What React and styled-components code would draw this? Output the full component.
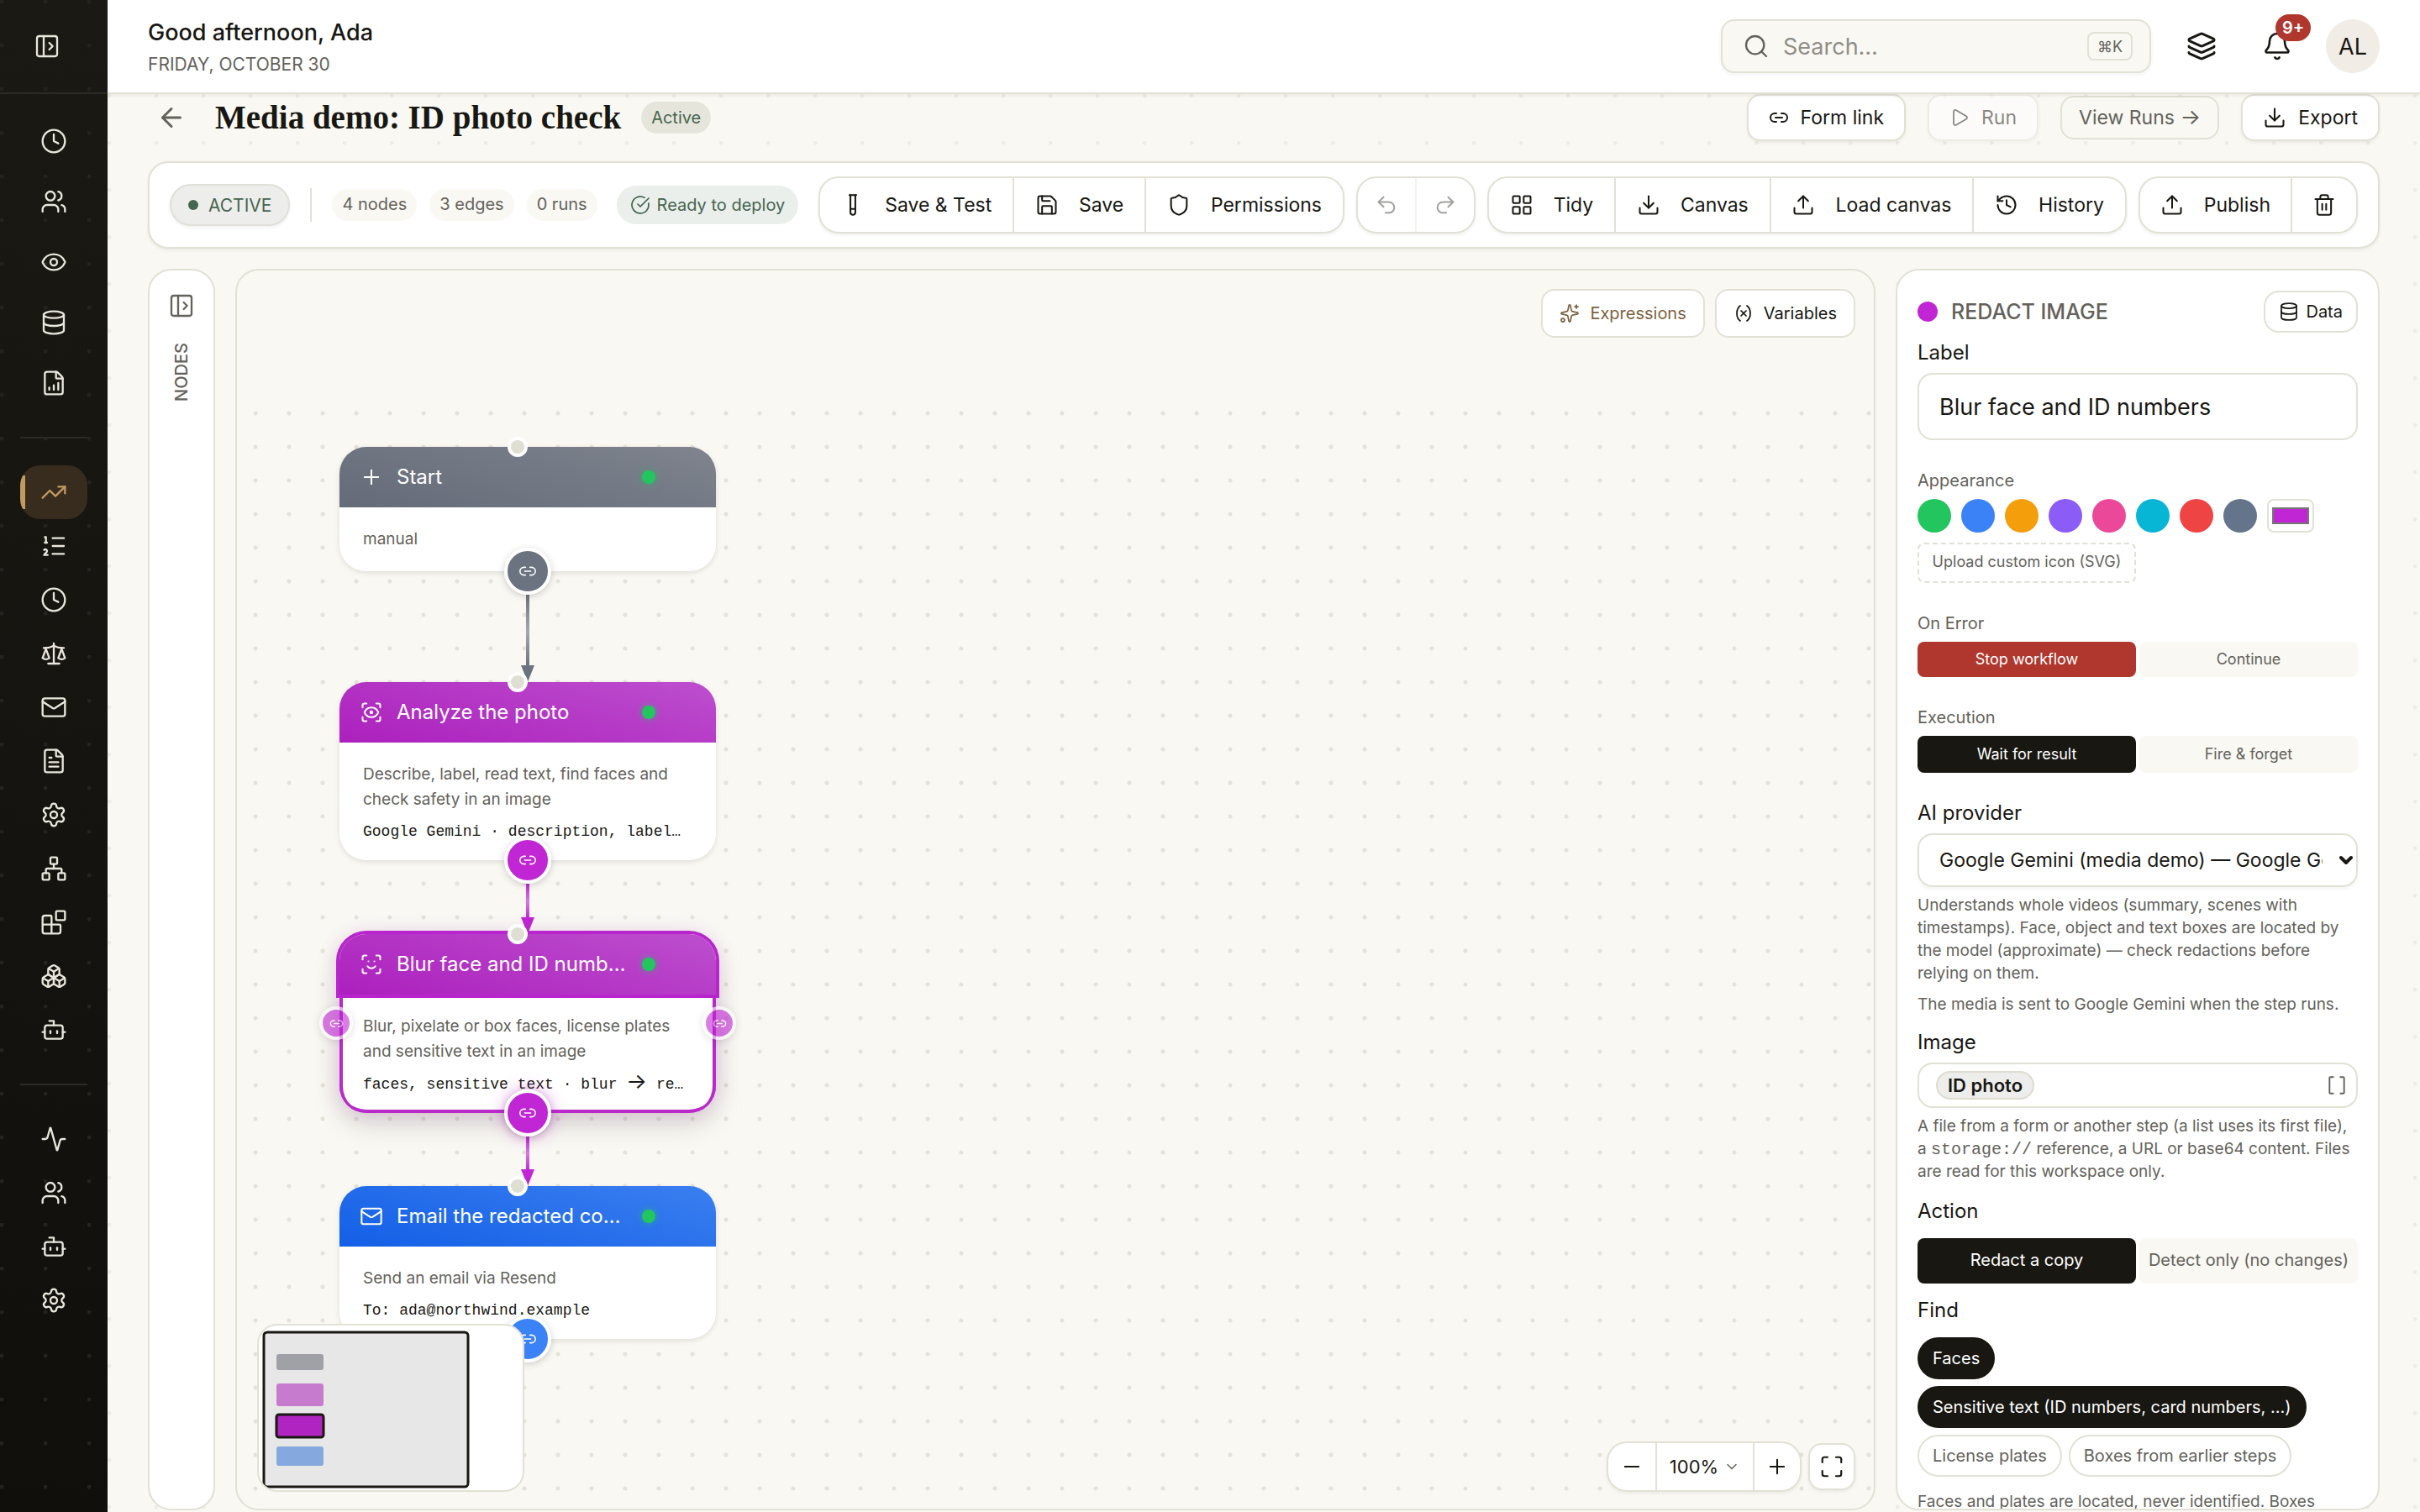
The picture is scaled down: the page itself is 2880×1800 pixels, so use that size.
import React from 'react'
import styled, { createGlobalStyle, css } from 'styled-components'
import {
  Activity, ArrowLeft, Bell, Blocks, Bot, Boxes, Brackets, ChevronDown, CircleCheckBig, Clock,
  Database, Download, Eye, FileChartColumnIncreasing, FileText, History, Layers, LayoutGrid,
  Link2, ListOrdered, Mail, Maximize, Minus, Network, PanelLeftOpen, Play, Plus, Redo2, Save,
  Scale, ScanEye, ScanFace, Search, Settings, Shield, Sparkles, TestTube, Trash2, TrendingUp,
  Undo2, Upload, Users, Variable
} from 'lucide-react'

const GlobalStyle = createGlobalStyle`
  :root {
    --ink: #181712;
    --muted: #63625b;
    --line: #e2e1d5;
    --paper: #f9f8f3;
    --cream: #e9e6dc;
    --red: #b0372d;
    --green: #46654f;
    --sans: 'Inter', 'Liberation Sans', sans-serif;
    --serif: 'Liberation Serif', serif;
    --mono: 'Liberation Mono', monospace;
  }

  * {
    box-sizing: border-box;
  }

  body {
    margin: 0;
    background: var(--paper);
    color: var(--ink);
    font-family: var(--sans);
  }

  button, input, select {
    font-family: inherit;
    color: inherit;
    margin: 0;
  }

  button {
    cursor: pointer;
  }
`

/* ---------- shell ---------- */

const Shell = styled.div`
  display: grid;
  grid-template-columns: 128px minmax(0, 1fr);
  height: 100vh;
  overflow: hidden;
`

const Sidebar = styled.aside`
  display: flex;
  flex-direction: column;
  color: var(--cream);
  background:
    radial-gradient(circle at 2px 2px, #24231f 2px, transparent 3px) 0 0 / 52px 52px,
    linear-gradient(#1b1913, #110f0c);
`

const SidebarTop = styled.div`
  height: 112px;
  padding-left: 28px;
  display: flex;
  align-items: center;
  border-bottom: 2px solid #2c2b27;
`

const PlainButton = styled.button`
  width: ${props => props.$size || 56}px;
  height: ${props => props.$size || 56}px;
  padding: 0;
  border: 0;
  background: none;
  display: grid;
  place-items: center;
  flex: none;
  position: relative;
  color: ${props => props.$muted ? 'var(--muted)' : 'inherit'};
`

const Nav = styled.nav`
  padding: 24px;
  display: flex;
  flex-direction: column;
`

const NavGroup = styled.div`
  display: flex;
  flex-direction: column;
  gap: ${props => props.$gap || 0}px;

  & + & {
    margin-top: 32px;
    padding-top: 32px;
    border-top: 2px solid #2c2b27;
  }
`

const NavLink = styled.a`
  height: 64px;
  display: grid;
  place-items: center;
  color: inherit;
  border-radius: 24px;

  ${props => props.$active && css`
    color: #c09a5f;
    background: linear-gradient(90deg, #c09a5f 6px, transparent 6px) 0 50% / 100% 40px no-repeat, #382c1f;
  `}
`

const Main = styled.main`
  display: flex;
  flex-direction: column;
  min-width: 0;
  height: 100vh;
`

const Header = styled.header`
  height: 112px;
  flex: none;
  padding: 0 48px;
  display: flex;
  align-items: center;
  background: #fff;
  border-bottom: 2px solid var(--line);
  box-shadow: 0 2px 4px rgba(24, 23, 18, .06);
  position: relative;
`

const Greeting = styled.div`
  flex: 1;
  padding-top: 4px;
`

const Hello = styled.div`
  font-size: 27px;
  line-height: 40px;
  font-weight: 500;
`

const Today = styled.div`
  font-size: 21px;
  line-height: 36px;
  color: var(--muted);
`

const SearchBox = styled.label`
  width: 512px;
  height: 64px;
  padding: 0 20px 0 24px;
  display: flex;
  align-items: center;
  gap: 16px;
  border: 2px solid var(--line);
  border-radius: 16px;
  background: var(--paper);
  color: var(--muted);
  box-shadow: 0 2px 4px rgba(24, 23, 18, .05);
`

const SearchInput = styled.input`
  flex: 1;
  min-width: 0;
  padding: 0;
  border: 0;
  outline: 0;
  background: none;
  font-size: 27px;

  &::placeholder {
    color: #8f8e86;
    opacity: 1;
  }
`

const Kbd = styled.kbd`
  height: 34px;
  padding: 0 10px;
  display: flex;
  align-items: center;
  border: 2px solid var(--line);
  border-radius: 8px;
  font-family: var(--sans);
  font-size: 18px;
`

const HeaderIcons = styled.div`
  display: flex;
  align-items: center;
  gap: 26px;
  margin-left: 28px;
`

const Count = styled.span`
  position: absolute;
  top: -6px;
  left: 30px;
  height: 32px;
  min-width: 40px;
  padding: 0 8px;
  border-radius: 16px;
  background: var(--red);
  color: #fff;
  font-size: 20px;
  line-height: 32px;
  font-weight: 600;
`

const Avatar = styled.button`
  width: 64px;
  height: 64px;
  padding: 0;
  border: 0;
  border-radius: 50%;
  background: #f1ece6;
  font-size: 27px;
`

const Page = styled.div`
  flex: 1;
  min-height: 0;
  padding: 0 48px 2px;
  display: flex;
  flex-direction: column;
  gap: 24px;
  background: radial-gradient(circle at 2px 2px, #eeede5 2px, transparent 3px) 0 0 / 56px 56px;
`

/* ---------- title row ---------- */

const TitleRow = styled.div`
  height: 56px;
  flex: none;
  display: flex;
  align-items: center;
  gap: 24px;
`

const Title = styled.h1`
  margin: 0;
  font-family: var(--serif);
  font-size: 39px;
  line-height: 48px;
  font-weight: 700;
`

const StatusTag = styled.span`
  height: 38px;
  padding: 0 12px;
  border-radius: 19px;
  background: #e6e5dc;
  color: var(--green);
  font-size: 20px;
  line-height: 38px;
  margin-right: auto;
`

const Actions = styled.div`
  display: flex;
  align-items: center;
  gap: 26px;
`

const ActionButton = styled.button`
  height: ${props => props.$ghost ? 52 : 56}px;
  padding: 0 ${props => props.$ghost ? 20 : 24}px;
  display: flex;
  align-items: center;
  gap: 14px;
  border: 2px solid var(--line);
  border-radius: 16px;
  background: ${props => props.$ghost ? 'transparent' : '#fff'};
  color: ${props => props.$ghost ? 'var(--muted)' : 'var(--ink)'};
  font-size: 23px;
  white-space: pre;
  box-shadow: ${props => props.$ghost ? 'none' : '0 2px 4px rgba(24, 23, 18, .06)'};

  &:disabled {
    opacity: .5;
    color: var(--ink);
  }
`

/* ---------- toolbar ---------- */

const Toolbar = styled.section`
  height: 104px;
  flex: none;
  padding: 0 24px;
  display: flex;
  align-items: center;
  gap: 14px;
  background: #fff;
  border: 2px solid var(--line);
  border-radius: 24px;
  box-shadow: 0 2px 4px rgba(24, 23, 18, .06);
`

const ToolbarInfo = styled.div`
  display: flex;
  align-items: center;
  flex: none;
  margin-right: 10px;
`

const LivePill = styled.span`
  height: 50px;
  padding: 0 20px;
  display: flex;
  align-items: center;
  gap: 12px;
  border: 2px solid #e0dfd8;
  border-radius: 25px;
  background: #ededeb;
  color: var(--green);
  font-size: 21px;
  box-shadow: 0 2px 4px rgba(24, 23, 18, .06);

  &::before {
    content: '';
    width: 12px;
    height: 12px;
    border-radius: 50%;
    background: currentColor;
  }
`

const Rule = styled.span`
  width: 2px;
  height: 40px;
  margin: 0 24px;
  background: var(--line);
`

const Chip = styled.span`
  height: 38px;
  padding: 0 12px;
  margin-right: 15px;
  border-radius: 19px;
  background: var(--paper);
  color: var(--muted);
  font-size: 20px;
  line-height: 36px;
`

const ReadyChip = styled.span`
  height: 46px;
  padding: 0 16px;
  margin-left: 8px;
  display: flex;
  align-items: center;
  gap: 8px;
  border-radius: 23px;
  background: #eaefeb;
  color: var(--green);
  font-size: 20px;
`

const ButtonGroup = styled.div`
  height: 68px;
  display: flex;
  flex: ${props => props.$grow || 0} 0 auto;
  border: 2px solid var(--line);
  border-radius: 24px;
  overflow: hidden;
  background: #fff;
  box-shadow: 0 2px 4px rgba(24, 23, 18, .06);
`

const ToolButton = styled.button`
  flex: 1 0 auto;
  padding: 0 ${props => props.$narrow ? 20 : 24}px;
  display: flex;
  align-items: center;
  justify-content: center;
  gap: 24px;
  border: 0;
  background: none;
  font-size: 23px;

  & + & {
    border-left: 2px solid var(--line);
  }

  &:disabled {
    opacity: .4;
  }
`

/* ---------- workspace ---------- */

const Workspace = styled.div`
  flex: 1;
  min-height: 0;
  display: grid;
  grid-template-columns: 80px minmax(0, 1fr) 576px;
  grid-template-rows: minmax(0, 1fr);
  gap: 24px;
`

const panel = css`
  border: 2px solid var(--line);
  border-radius: 28px;
  overflow: hidden;
`

const NodesRail = styled.aside`
  ${panel}
  background: #fff;
  padding-top: 14px;
  display: flex;
  flex-direction: column;
  align-items: center;
  gap: 16px;
`

const RailTitle = styled.span`
  writing-mode: vertical-rl;
  transform: rotate(180deg);
  color: var(--muted);
  font-size: 20px;
  line-height: 24px;
  font-weight: 500;
`

const Canvas = styled.section`
  ${panel}
  position: relative;
  background: var(--paper);

  &::before {
    content: '';
    position: absolute;
    inset: 150px 0 0 0;
    background: radial-gradient(circle at 22px 20px, #e4e2d9 2px, transparent 3px) 0 0 / 40px 40px;
  }
`

const CanvasActions = styled.div`
  position: absolute;
  top: 22px;
  right: 22px;
  display: flex;
  gap: 12px;
`

const CanvasAction = styled.button`
  height: 58px;
  padding: 0 20px;
  display: flex;
  align-items: center;
  gap: 12px;
  border: 2px solid var(--line);
  border-radius: 16px;
  background: #fff;
  color: ${props => props.$gold ? '#7c6240' : 'var(--ink)'};
  font-size: 20px;
`

const Node = styled.article`
  position: absolute;
  left: ${props => props.$x}px;
  top: ${props => props.$y}px;
  width: 448px;
  border-radius: 32px;
  box-shadow: ${props => props.$selected
    ? '0 12px 32px rgba(24, 23, 18, .16), 0 0 24px rgba(192, 38, 211, .16)'
    : '0 2px 6px rgba(24, 23, 18, .12)'};
`

const NodeHead = styled.header`
  position: relative;
  z-index: 1;
  height: 72px;
  padding: 0 72px 0 24px;
  display: flex;
  align-items: center;
  border-radius: 32px 32px 0 0;
  color: #fff;
  background: linear-gradient(15deg, ${props => props.$from}, ${props => props.$to});
  box-shadow: ${props => props.$selected ? '0 0 0 4px #b925cd' : 'none'};
`

const NodeTitle = styled.h2`
  margin: 0 0 0 16px;
  flex: 1;
  min-width: 0;
  font-size: 24px;
  line-height: 32px;
  font-weight: 400;
  white-space: nowrap;
  overflow: hidden;
  text-overflow: ellipsis;
`

const Health = styled.span`
  width: 16px;
  height: 16px;
  margin-left: 16px;
  border-radius: 50%;
  background: #22c55e;
  box-shadow: 0 0 8px rgba(34, 197, 94, .6);
`

const NodeBody = styled.div`
  padding: 23px 28px;
  border-radius: 0 0 32px 32px;
  background: #fff;
  box-shadow: ${props => props.$selected
    ? 'inset 4px 0 #b92bc9, inset -4px 0 #b92bc9, inset 0 -4px #b92bc9'
    : 'none'};
`

const NodeText = styled.p`
  margin: 0;
  font-size: 19px;
  line-height: 30px;
  color: var(--muted);
`

const NodeCode = styled.p`
  margin: 12px 4px 0 0;
  font-family: var(--mono);
  font-size: 18px;
  line-height: 22px;
  white-space: nowrap;
  overflow: hidden;
  text-overflow: ellipsis;
`

const Arrow = styled.span`
  font-family: var(--sans);
  font-size: 26px;
  line-height: 16px;
`

const InPort = styled.span`
  position: absolute;
  z-index: 1;
  top: -12px;
  left: 200px;
  width: 24px;
  height: 24px;
  border: 4px solid #fff;
  border-radius: 50%;
  background: #dfded3;
`

const OutPort = styled.button`
  position: absolute;
  z-index: 1;
  bottom: -28px;
  left: 196px;
  width: 56px;
  height: 56px;
  padding: 0;
  display: grid;
  place-items: center;
  border: 4px solid #fff;
  border-radius: 50%;
  background: ${props => props.$color};
  color: #fff;
  box-shadow: 0 2px 8px rgba(24, 23, 18, .2)${props => props.$selected ? ', 0 0 20px rgba(192, 38, 211, .4)' : ''};
`

const SidePort = styled(OutPort)`
  top: 86px;
  bottom: auto;
  left: ${props => props.$right ? 432 : -24}px;
  width: 40px;
  height: 40px;
  opacity: .6;
`

const Edge = styled.svg`
  position: absolute;
  left: ${props => props.$x}px;
  top: ${props => props.$y}px;
`

const Minimap = styled.div`
  position: absolute;
  z-index: 2;
  left: 24px;
  bottom: 20px;
  width: 318px;
  height: 200px;
  border: 2px solid var(--line);
  border-radius: 24px;
  background: #fff;
  overflow: hidden;
`

const ZoomBar = styled.div`
  position: absolute;
  right: 22px;
  bottom: 20px;
  display: flex;
  align-items: center;
  gap: 8px;
`

const ZoomGroup = styled(ButtonGroup)`
  height: 60px;
`

const ZoomButton = styled.button`
  padding: 0;
  width: ${props => props.$wide ? 116 : 56}px;
  display: flex;
  align-items: center;
  justify-content: center;
  gap: 6px;
  border: 0;
  background: none;
  font-size: 22px;

  & + & {
    border-left: 2px solid var(--line);
  }
`

const FitButton = styled(ZoomButton)`
  height: 56px;
  border: 2px solid var(--line);
  border-radius: 16px;
  background: #fff;
  box-shadow: 0 2px 4px rgba(24, 23, 18, .06);
`

/* ---------- inspector ---------- */

const Inspector = styled.aside`
  ${panel}
  padding: 24px;
  background: #fff;
`

const InspectorHead = styled.div`
  height: 50px;
  display: flex;
  align-items: center;
  gap: 16px;
  margin-bottom: 8px;
`

const Dot = styled.span`
  width: 24px;
  height: 24px;
  border-radius: 50%;
  background: #c026d3;
`

const InspectorTitle = styled.h2`
  margin: 0;
  flex: 1;
  font-size: 25px;
  font-weight: 500;
  color: var(--muted);
`

const DataButton = styled.button`
  height: 50px;
  padding: 0 16px;
  display: flex;
  align-items: center;
  gap: 8px;
  border: 2px solid var(--line);
  border-radius: 18px;
  background: #fff;
  font-size: 20px;
`

const Field = styled.div`
  display: flex;
  flex-direction: column;
  gap: ${props => props.$gap || 8}px;
  margin-bottom: ${props => props.$after || 16}px;
`

const FieldLabel = styled.label`
  font-size: ${props => props.$small ? 20 : 24}px;
  line-height: ${props => props.$small ? 28 : 32}px;
  color: ${props => props.$small ? 'var(--muted)' : 'var(--ink)'};
`

const TextInput = styled.input`
  width: 100%;
  height: 80px;
  padding: 0 24px;
  border: 2px solid var(--line);
  border-radius: 18px;
  background: #fff;
  font-size: 27px;
`

const Swatches = styled.div`
  display: flex;
  flex-wrap: wrap;
  gap: 12px;
`

const Swatch = styled.button`
  width: 40px;
  height: 40px;
  padding: 0;
  border: 0;
  border-radius: 50%;
  background: ${props => props.$color};
`

const ColorInput = styled.input`
  width: 56px;
  height: 40px;
  padding: 8px 4px;
  border: 2px solid var(--line);
  border-radius: 8px;
  background: #fff;

  &::-webkit-color-swatch-wrapper {
    padding: 0;
  }

  &::-webkit-color-swatch {
    border: 2px solid #767676;
    border-radius: 0;
  }
`

const UploadButton = styled.button`
  height: 48px;
  width: 260px;
  padding: 0 0 4px;
  border: 2px dashed var(--line);
  border-radius: 8px;
  background: none;
  color: var(--muted);
  font-size: 18px;
`

const Segments = styled.div`
  display: grid;
  grid-template-columns: 1fr 1fr;
  gap: 4px;
`

const Segment = styled.button`
  height: ${props => props.$height || 42}px;
  padding: 0 0 2px;
  border: 0;
  border-radius: 8px;
  background: ${props => props.$fill || 'var(--paper)'};
  color: ${props => props.$fill ? '#fff' : 'var(--muted)'};
  font-size: ${props => props.$large ? 20 : 18}px;
  white-space: nowrap;
`

const SelectWrap = styled.div`
  position: relative;

  svg {
    position: absolute;
    right: 2px;
    top: 20px;
    pointer-events: none;
  }
`

const Select = styled.select`
  appearance: none;
  width: 100%;
  height: 64px;
  padding: 0 40px 0 24px;
  border: 2px solid var(--line);
  border-radius: 18px;
  background: #fff;
  font-size: 23px;
  box-shadow: 0 2px 4px rgba(24, 23, 18, .05);
`

const Help = styled.p`
  margin: 0;
  font-size: 19px;
  line-height: 27px;
  color: var(--muted);

  & + & {
    margin-top: 2px;
  }

  code {
    font-family: var(--mono);
    font-size: 20px;
    line-height: 20px;
  }
`

const TokenField = styled.div`
  height: 54px;
  padding: 0 10px 0 20px;
  display: flex;
  align-items: center;
  justify-content: space-between;
  border: 2px solid var(--line);
  border-radius: 18px;
`

const Token = styled.button`
  height: 34px;
  padding: 0 12px;
  border: 2px solid #dedccf;
  border-radius: 17px;
  background: #ededec;
  font-size: 22px;
  line-height: 28px;
  font-weight: 600;
`

const Pills = styled.div`
  display: flex;
  flex-wrap: wrap;
  gap: 8px;
`

const Pill = styled.button`
  height: 50px;
  padding: 0 16px;
  border: 2px solid ${props => props.$on ? 'var(--ink)' : 'var(--line)'};
  border-radius: 25px;
  background: ${props => props.$on ? 'var(--ink)' : '#fff'};
  color: ${props => props.$on ? '#fff' : 'var(--muted)'};
  font-size: 20px;
`

const navGroups = [
  { gap: 8, items: [['Recent', Clock], ['People', Users], ['Views', Eye], ['Data', Database], ['Reports', FileChartColumnIncreasing]] },
  {
    items: [
      ['Workflows', TrendingUp], ['Queues', ListOrdered], ['Schedules', Clock], ['Rules', Scale],
      ['Mail', Mail], ['Forms', FileText], ['Options', Settings], ['Network', Network],
      ['Blocks', Blocks], ['Packages', Boxes], ['Agents', Bot]
    ]
  },
  { items: [['Activity', Activity], ['Team', Users], ['Assistants', Bot], ['Settings', Settings]] }
]

const purple = ['#ac20bd', '#bd4fce']

const nodes = [
  { y: 210, icon: Plus, title: 'Start', text: 'manual', color: '#6b7280', grad: ['#646b78', '#7f848e'] },
  {
    y: 490, icon: ScanEye, title: 'Analyze the photo', color: '#c026d3', grad: purple,
    text: 'Describe, label, read text, find faces and check safety in an image',
    code: 'Google Gemini · description, labels, text, faces'
  },
  {
    y: 790, icon: ScanFace, title: 'Blur face and ID numbers', color: '#c026d3', grad: purple, selected: true,
    text: 'Blur, pixelate or box faces, license plates and sensitive text in an image',
    code: <>faces, sensitive text · blur <Arrow>→</Arrow> redacted image</>
  },
  {
    y: 1090, icon: Mail, title: 'Email the redacted copy to Ada', color: '#3b82f6', grad: ['#135fe6', '#3b7ff0'],
    text: 'Send an email via Resend', code: 'To: ada@northwind.example'
  }
]

const edges = [
  { id: 'a', y: 386, height: 104, color: '#6b7280' },
  { id: 'b', y: 730, height: 60, color: '#c026d3' },
  { id: 'c', y: 1030, height: 60, color: '#c026d3' }
]

const swatches = ['#22c55e', '#3b82f6', '#f59e0b', '#8b5cf6', '#ec4899', '#06b6d4', '#ef4444', '#64748b']

const FlowNode = ({ node }) => {
  const Icon = node.icon
  return (
    <Node $x={122} $y={node.y} $selected={node.selected}>
      <NodeHead $from={node.grad[0]} $to={node.grad[1]} $selected={node.selected}>
        <Icon size={28} strokeWidth={1.75} />
        <NodeTitle>{node.title}</NodeTitle>
        <Health />
      </NodeHead>
      <NodeBody $selected={node.selected}>
        <NodeText>{node.text}</NodeText>
        {node.code && <NodeCode>{node.code}</NodeCode>}
      </NodeBody>
      <InPort />
      {node.selected && (
        <>
          <SidePort aria-label="Connect left" $color={node.color}><Link2 size={17} /></SidePort>
          <SidePort aria-label="Connect right" $color={node.color} $right><Link2 size={17} /></SidePort>
        </>
      )}
      <OutPort aria-label="Connect" $color={node.color} $selected={node.selected}><Link2 size={22} strokeWidth={1.75} /></OutPort>
    </Node>
  )
}

const FlowEdge = ({ edge }) => (
  <Edge $x={338} $y={edge.y} width="16" height={edge.height} viewBox={`0 0 16 ${edge.height}`}>
    <defs>
      <linearGradient id={`edge-${edge.id}`} x1="0" y1="0" x2="0" y2="1">
        <stop offset="0" stopColor={edge.color} />
        <stop offset=".5" stopColor={edge.color} stopOpacity=".6" />
        <stop offset="1" stopColor={edge.color} />
      </linearGradient>
    </defs>
    <rect x="6" y="0" width="4" height={edge.height - 18} fill={`url(#edge-${edge.id})`} />
    <path d={`M0 ${edge.height - 20}h16l-8 20z`} fill={edge.color} />
  </Edge>
)

const App = () => {
  return (
    <>
      <GlobalStyle />
      <Shell>
        <Sidebar>
          <SidebarTop>
            <PlainButton aria-label="Expand sidebar"><PanelLeftOpen size={32} strokeWidth={1.75} /></PlainButton>
          </SidebarTop>
          <Nav>
            {navGroups.map((group, i) => (
              <NavGroup key={i} $gap={group.gap}>
                {group.items.map(([name, Icon]) => (
                  <NavLink key={name} href="#" aria-label={name} $active={name === 'Workflows'}>
                    <Icon size={32} strokeWidth={1.75} />
                  </NavLink>
                ))}
              </NavGroup>
            ))}
          </Nav>
        </Sidebar>

        <Main>
          <Header>
            <Greeting>
              <Hello>Good afternoon, Ada</Hello>
              <Today>FRIDAY, OCTOBER 30</Today>
            </Greeting>
            <SearchBox>
              <Search size={32} strokeWidth={1.75} />
              <SearchInput placeholder="Search…" aria-label="Search" />
              <Kbd>⌘K</Kbd>
            </SearchBox>
            <HeaderIcons>
              <PlainButton aria-label="Layers" $size={64}><Layers size={36} strokeWidth={2} /></PlainButton>
              <PlainButton aria-label="Notifications" $size={64}><Bell size={36} strokeWidth={1.75} /><Count>9+</Count></PlainButton>
              <Avatar>AL</Avatar>
            </HeaderIcons>
          </Header>

          <Page>
            <TitleRow>
              <PlainButton aria-label="Back" $muted><ArrowLeft size={36} strokeWidth={2} /></PlainButton>
              <Title>Media demo: ID photo check</Title>
              <StatusTag>Active</StatusTag>
              <Actions>
                <ActionButton><Link2 size={24} />Form link</ActionButton>
                <ActionButton disabled><Play size={24} strokeWidth={1.75} />Run</ActionButton>
                <ActionButton $ghost><span>View Runs <Arrow>→</Arrow></span></ActionButton>
                <ActionButton><Download size={28} strokeWidth={1.75} />Export</ActionButton>
              </Actions>
            </TitleRow>

            <Toolbar>
              <ToolbarInfo>
                <LivePill>ACTIVE</LivePill>
                <Rule />
                <Chip>4 nodes</Chip>
                <Chip>3 edges</Chip>
                <Chip>0 runs</Chip>
                <ReadyChip><CircleCheckBig size={24} strokeWidth={1.75} />Ready to deploy</ReadyChip>
              </ToolbarInfo>
              <ButtonGroup $grow={3}>
                <ToolButton><TestTube size={28} strokeWidth={1.75} />Save &amp; Test</ToolButton>
                <ToolButton><Save size={28} strokeWidth={1.75} />Save</ToolButton>
                <ToolButton><Shield size={28} strokeWidth={1.75} />Permissions</ToolButton>
              </ButtonGroup>
              <ButtonGroup>
                <ToolButton disabled $narrow aria-label="Undo"><Undo2 size={28} strokeWidth={1.75} /></ToolButton>
                <ToolButton disabled $narrow aria-label="Redo"><Redo2 size={28} strokeWidth={1.75} /></ToolButton>
              </ButtonGroup>
              <ButtonGroup $grow={4}>
                <ToolButton><LayoutGrid size={28} strokeWidth={1.75} />Tidy</ToolButton>
                <ToolButton><Download size={28} strokeWidth={1.75} />Canvas</ToolButton>
                <ToolButton><Upload size={28} strokeWidth={1.75} />Load canvas</ToolButton>
                <ToolButton><History size={28} strokeWidth={1.75} />History</ToolButton>
              </ButtonGroup>
              <ButtonGroup>
                <ToolButton><Upload size={28} strokeWidth={1.75} />Publish</ToolButton>
                <ToolButton aria-label="Delete"><Trash2 size={28} strokeWidth={1.75} /></ToolButton>
              </ButtonGroup>
            </Toolbar>

            <Workspace>
              <NodesRail>
                <PlainButton aria-label="Open nodes" $muted><PanelLeftOpen size={32} strokeWidth={1.75} /></PlainButton>
                <RailTitle>NODES</RailTitle>
              </NodesRail>

              <Canvas>
                {edges.map(edge => <FlowEdge key={edge.id} edge={edge} />)}
                {nodes.map(node => <FlowNode key={node.title} node={node} />)}
                <CanvasActions>
                  <CanvasAction $gold><Sparkles size={24} strokeWidth={1.75} />Expressions</CanvasAction>
                  <CanvasAction><Variable size={24} strokeWidth={1.75} />Variables</CanvasAction>
                </CanvasActions>
                <Minimap>
                  <svg width="314" height="196" viewBox="0 0 314 196">
                    <rect x="6" y="8" width="243" height="184" rx="4" fill="#e7e7e7" stroke="#181712" strokeWidth="3" />
                    <rect x="21" y="34" width="56" height="19" rx="3" fill="#9fa1a7" />
                    <rect x="21" y="69" width="56" height="27" rx="3" fill="#c67bce" />
                    <rect x="21" y="106" width="56" height="27" rx="3" fill="#b024c1" stroke="#181712" strokeWidth="3" />
                    <rect x="21" y="144" width="56" height="23" rx="3" fill="#85a8df" />
                  </svg>
                </Minimap>
                <ZoomBar>
                  <ZoomGroup>
                    <ZoomButton aria-label="Zoom out"><Minus size={28} strokeWidth={1.75} /></ZoomButton>
                    <ZoomButton $wide>100%<ChevronDown size={20} strokeWidth={1.75} color="#63625b" /></ZoomButton>
                    <ZoomButton aria-label="Zoom in"><Plus size={28} strokeWidth={1.75} /></ZoomButton>
                  </ZoomGroup>
                  <FitButton aria-label="Fit view"><Maximize size={30} strokeWidth={1.75} /></FitButton>
                </ZoomBar>
              </Canvas>

              <Inspector>
                <InspectorHead>
                  <Dot />
                  <InspectorTitle>REDACT IMAGE</InspectorTitle>
                  <DataButton><Database size={24} strokeWidth={1.75} />Data</DataButton>
                </InspectorHead>

                <Field $after={34}>
                  <FieldLabel htmlFor="label">Label</FieldLabel>
                  <TextInput id="label" defaultValue="Blur face and ID numbers" />
                </Field>

                <Field $after={34}>
                  <FieldLabel as="span" $small>Appearance</FieldLabel>
                  <Swatches>
                    {swatches.map(color => <Swatch key={color} $color={color} aria-label={color} />)}
                    <ColorInput type="color" defaultValue="#c026d3" aria-label="Custom color" />
                    <UploadButton>Upload custom icon (SVG)</UploadButton>
                  </Swatches>
                </Field>

                <Field $after={34}>
                  <FieldLabel as="span" $small>On Error</FieldLabel>
                  <Segments>
                    <Segment $fill="var(--red)">Stop workflow</Segment>
                    <Segment>Continue</Segment>
                  </Segments>
                </Field>

                <Field $after={32}>
                  <FieldLabel as="span" $small>Execution</FieldLabel>
                  <Segments>
                    <Segment $fill="var(--ink)" $height={44}>Wait for result</Segment>
                    <Segment $height={44}>Fire &amp; forget</Segment>
                  </Segments>
                </Field>

                <Field>
                  <FieldLabel htmlFor="provider">AI provider</FieldLabel>
                  <SelectWrap>
                    <Select id="provider">
                      <option>Google Gemini (media demo) — Google Gemini</option>
                    </Select>
                    <ChevronDown size={24} strokeWidth={4} />
                  </SelectWrap>
                  <Help>
                    Understands whole videos (summary, scenes with timestamps). Face, object and text boxes
                    are located by the model (approximate) — check redactions before relying on them.
                  </Help>
                  <Help>The media is sent to Google Gemini when the step runs.</Help>
                </Field>

                <Field $after={18}>
                  <FieldLabel as="span">Image</FieldLabel>
                  <TokenField>
                    <Token>ID photo</Token>
                    <Brackets size={26} strokeWidth={1.75} color="#63625b" />
                  </TokenField>
                  <Help>
                    A file from a form or another step (a list uses its first file), a <code>storage://</code> reference,
                    a URL or base64 content. Files are read for this workspace only.
                  </Help>
                </Field>

                <Field $gap={16}>
                  <FieldLabel as="span">Action</FieldLabel>
                  <Segments>
                    <Segment $fill="var(--ink)" $height={54} $large>Redact a copy</Segment>
                    <Segment $height={54} $large>Detect only (no changes)</Segment>
                  </Segments>
                </Field>

                <Field $gap={16}>
                  <FieldLabel as="span">Find</FieldLabel>
                  <Pills>
                    <Pill $on>Faces</Pill>
                    <Pill $on>Sensitive text (ID numbers, card numbers, …)</Pill>
                    <Pill>License plates</Pill>
                    <Pill>Boxes from earlier steps</Pill>
                  </Pills>
                  <Help>Faces and plates are located, never identified. Boxes from&nbsp;earlier steps can be reused.</Help>
                </Field>
              </Inspector>
            </Workspace>
          </Page>
        </Main>
      </Shell>
    </>
  )
}

export default App
